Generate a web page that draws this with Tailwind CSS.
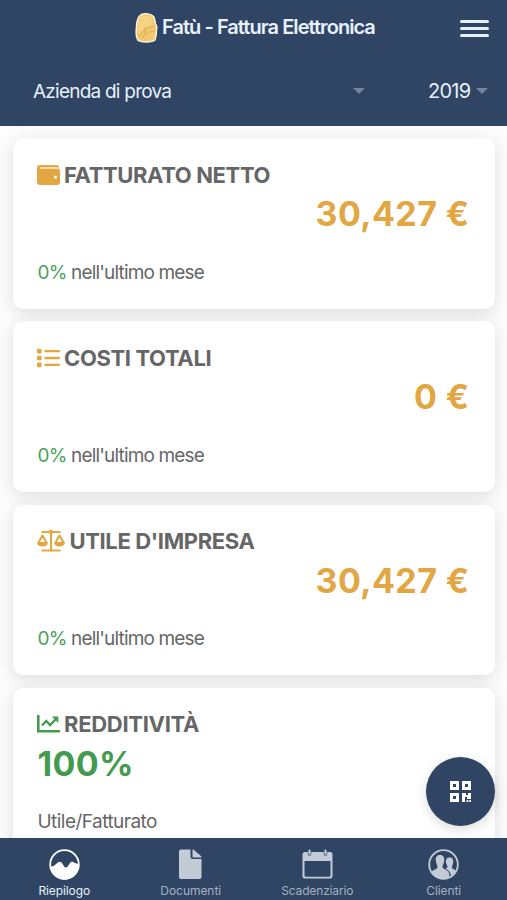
<!DOCTYPE html>
<html lang="it">
<head>
<meta charset="utf-8">
<title>Fatù - Fattura Elettronica</title>
<script src="https://cdn.jsdelivr.net/npm/@tailwindcss/browser@4"></script>
</head>
<body class="bg-white">
<div class="relative flex h-[900px] w-[507px] flex-col overflow-hidden bg-[#fdfdfd] font-['Inter',sans-serif] text-[#666]">
  <header class="z-10 h-[125.500px] shrink-0 bg-[#304463] text-[#e6f1fc]">
    <div class="flex h-[56px] items-center pr-[18px] pl-[135px]">
      <svg class="mt-[-1px] h-[30px] w-[23px] shrink-0" viewBox="0 0 23 30"><path d="M7 1.2C10 .2 16 .5 18.500 3.500C20.500 6 20 9 20.500 11C22.500 13 22 15 21.500 17C21.200 20 21.500 24 20 27C17 29.500 7 29.700 3 27.500C.5 24 .8 19 1.500 14C1.200 9 3 3 7 1.200Z" fill="#f0c970" stroke="#faf3e6" stroke-width="1.400"/><path d="M7 3C10 2 15 2.500 17 5C18.500 9 17 11 15 13C10 14 6 18 3.500 21C2.500 14 3 6 7 3Z" fill="#f4d382"/><path d="M4 24C8 17 14 14 20 13M7 25C11 20 15 18 20 18M10 14C9 18 10 20 9 23" fill="none" stroke="#dfb050" stroke-width="1"/></svg>
      <h1 class="mt-[-3px] ml-[4px] w-[213px] text-[20px] leading-[28px] font-semibold tracking-[-0.95px] whitespace-nowrap">Fatù - Fattura Elettronica</h1>
      <div class="ml-auto flex w-[29px] flex-col gap-[4.500px] pt-px"><i class="h-[2.500px] rounded bg-[#e6f1fc]"></i><i class="h-[2.500px] rounded bg-[#e6f1fc]"></i><i class="h-[2.500px] rounded bg-[#e6f1fc]"></i></div>
    </div>
    <div class="flex h-[69px] items-center pr-[19px] pl-[33px] text-[19px] leading-[28px]">
      <span class="mt-[2px] tracking-[-0.77px]">Azienda di prova</span>
      <svg class="ml-auto h-[6px] w-[12px]" viewBox="0 0 12 6"><path d="M0 0H12L6 6Z" fill="#74849e"/></svg>
      <span class="mt-px ml-[63px] w-[42px] text-[20px] tracking-[-0.75px]">2019</span>
      <svg class="ml-[6px] h-[6px] w-[12px]" viewBox="0 0 12 6"><path d="M0 0H12L6 6Z" fill="#74849e"/></svg>
    </div>
  </header>

  <main class="flex h-[712.500px] shrink-0 flex-col gap-[12.700px] overflow-hidden px-[12.500px] pt-[12.500px]">
    <section class="h-[170.600px] shrink-0 rounded-[10px] bg-white px-[25px] pt-[23px] shadow-[0_4px_18px_rgba(0,0,0,0.13)]">
      <h2 class="flex h-[28px] items-center gap-[4px] text-[22px] font-bold tracking-[-0.37px]">
        <svg class="mt-[-1px] ml-[-0.500px] h-[20px] w-[23px]" viewBox="0 0 23 20"><path d="M3 0H19.500Q22 0 22 2.500V4Q23 4.400 23 6V17Q23 20 20 20H3Q0 20 0 17V3Q0 0 3 0Z" fill="#e2a643"/><path d="M3.500 3H21" stroke="#fbedd2" stroke-width="1.700" stroke-linecap="round"/><circle cx="18.500" cy="12" r="1.600" fill="#fff"/></svg>
        <span>FATTURATO NETTO</span>
      </h2>
      <p class="mt-[5px] h-[40px] text-right text-[34px] leading-[40px] font-bold tracking-[0.4px] text-[#e2a643]">30,427 €</p>
      <p class="mt-[24.500px] text-[19px] leading-[28px] tracking-[-0.83px]"><span class="text-[#4aa35a]">0%</span> nell'ultimo mese</p>
    </section>

    <section class="h-[170.600px] shrink-0 rounded-[10px] bg-white px-[25px] pt-[23px] shadow-[0_4px_18px_rgba(0,0,0,0.13)]">
      <h2 class="flex h-[28px] items-center gap-[4px] text-[22px] font-bold tracking-[-0.37px]">
        <svg class="mt-[-1px] ml-[-0.500px] h-[20px] w-[23px]" viewBox="0 0 23 20" fill="#e2a643"><rect y=".8" width="4.600" height="4.600" rx="1"/><rect y="7.700" width="4.600" height="4.600" rx="1"/><rect y="14.600" width="4.600" height="4.600" rx="1"/><rect x="7.300" y="1.900" width="15.700" height="2.400" rx="1"/><rect x="7.300" y="8.800" width="15.700" height="2.400" rx="1"/><rect x="7.300" y="15.700" width="15.700" height="2.400" rx="1"/></svg>
        <span>COSTI TOTALI</span>
      </h2>
      <p class="mt-[5px] h-[40px] text-right text-[34px] leading-[40px] font-bold tracking-[0.4px] text-[#e2a643]">0 €</p>
      <p class="mt-[24.500px] text-[19px] leading-[28px] tracking-[-0.83px]"><span class="text-[#4aa35a]">0%</span> nell'ultimo mese</p>
    </section>

    <section class="h-[170.600px] shrink-0 rounded-[10px] bg-white px-[25px] pt-[23px] shadow-[0_4px_18px_rgba(0,0,0,0.13)]">
      <h2 class="flex h-[28px] items-center gap-[4.500px] text-[22px] font-bold tracking-[-0.37px]">
        <svg class="mt-[-2px] ml-[-0.500px] h-[23px] w-[28px]" viewBox="0 0 28 23" fill="none" stroke="#e2a643" stroke-width="2"><path d="M4.500 3H23.500M14 1V21M4.500 21.500H23.500"/><circle cx="14" cy="3" r="2.200" fill="#e2a643" stroke="none"/><path d="M1.500 13.500L5.500 6.500L9.500 13.500M18.500 13.500L22.500 6.500L26.500 13.500" stroke-width="2" stroke-linejoin="round"/><path d="M0 13H11Q10.500 17.500 5.500 17.500T0 13ZM17 13H28Q27.500 17.500 22.500 17.500T17 13Z" fill="#e2a643" stroke="none"/></svg>
        <span>UTILE D'IMPRESA</span>
      </h2>
      <p class="mt-[5px] h-[40px] text-right text-[34px] leading-[40px] font-bold tracking-[0.4px] text-[#e2a643]">30,427 €</p>
      <p class="mt-[24.500px] text-[19px] leading-[28px] tracking-[-0.83px]"><span class="text-[#4aa35a]">0%</span> nell'ultimo mese</p>
    </section>

    <section class="h-[170.600px] shrink-0 rounded-[10px] bg-white px-[25px] pt-[23px] shadow-[0_4px_18px_rgba(0,0,0,0.13)]">
      <h2 class="flex h-[28px] items-center gap-[4px] text-[22px] font-bold tracking-[-0.3px]">
        <svg class="mt-[-1px] ml-[-0.500px] h-[18px] w-[23px]" viewBox="0 0 23 18" fill="none" stroke="#449b50"><path d="M1.300 0V16.300H23" stroke-width="2.600"/><path d="M5 10.500L9.300 6L13 10L19 4" stroke-width="2.300"/><path d="M14.800 1.500H21.300V8Z" fill="#449b50" stroke="none"/></svg>
        <span>REDDITIVITÀ</span>
      </h2>
      <p class="mt-[5px] h-[40px] text-[34px] leading-[40px] font-bold tracking-[0.3px] text-[#449b50]">100%</p>
      <p class="mt-[24.500px] text-[19px] leading-[28px] tracking-[-0.53px]">Utile/Fatturato</p>
    </section>
  </main>

  <button aria-label="QR" class="absolute top-[757px] left-[426px] z-10 flex size-[69px] items-center justify-center rounded-full bg-[#304463] shadow-[0_3px_12px_rgba(0,0,0,0.15)]">
    <svg class="size-[21px]" viewBox="0 0 21 21"><path fill="#fff" fill-rule="evenodd" d="M0 0H9V9H0ZM3 3V6H6V3ZM12 0H21V9H12ZM15 3V6H18V3ZM0 12H9V21H0ZM3 15V18H6V15ZM12 12H16V14H18V12H21V18H17V16H15V21H12ZM16.500 19H18.300V21H16.500ZM19.200 19H21V21H19.200Z"/></svg>
  </button>

  <nav class="grid h-[62px] shrink-0 grid-cols-4 bg-[#304463] pt-[11px] pl-px text-[12px] leading-[16px] text-[#a6b1c2]">
    <a class="flex flex-col items-center gap-[3px] text-[#e6f1fc]">
      <svg class="size-[31px]" viewBox="0 0 31 31"><circle cx="15.500" cy="15.500" r="14.300" fill="none" stroke="#fff" stroke-width="1.800"/><path d="M1.200 17.500C4 17.500 5 17 7 15C9 12.800 10.500 11.800 12.500 13.500C14.500 15.500 15 18.500 17 18.500C19 18.500 20 14.500 22 13C24 12 25 14.500 29.800 15A14.300 14.300 0 0 1 1.200 17.500Z" fill="#fff"/></svg>
      <span class="tracking-[-0.1px]">Riepilogo</span>
    </a>
    <a class="flex flex-col items-center gap-[3px]">
      <svg class="size-[31px]" viewBox="0 0 31 31" fill="#c3cbd7"><path d="M6 .5H15.500V7.500Q15.500 10 18 10H26.500V28Q26.500 30 24.500 30H6Q4 30 4 28V2.500Q4 .5 6 .5Z"/><path d="M17.500 .5H18.500L26.500 7.500V8.500H18.500Q17.500 8.500 17.500 7.500Z"/></svg>
      <span class="tracking-[-0.05px]">Documenti</span>
    </a>
    <a class="flex flex-col items-center gap-[3px]">
      <svg class="size-[31px]" viewBox="0 0 31 31"><path fill="#c3cbd7" fill-rule="evenodd" d="M3 3H28Q30.500 3 30.500 5.500V27Q30.500 29.500 28 29.500H3Q.5 29.500 .5 27V5.500Q.5 3 3 3ZM2.500 12V26.500Q2.500 27.700 4 27.700H27Q28.500 27.700 28.500 26.500V12Z"/><path d="M7.500 1V5M23.500 1V5" stroke="#304463" stroke-width="3.400" stroke-linecap="round"/><path d="M7.500 1.500V4.800M23.500 1.500V4.800" stroke="#c3cbd7" stroke-width="2.200" stroke-linecap="round"/></svg>
      <span class="tracking-[-0.15px]">Scadenziario</span>
    </a>
    <a class="flex flex-col items-center gap-[3px]">
      <svg class="size-[31px]" viewBox="0 0 31 31"><circle cx="15.500" cy="15.500" r="14.300" fill="none" stroke="#c3cbd7" stroke-width="1.800"/><path fill="#c3cbd7" d="M12 6C15.500 6 16.500 8.500 16.200 11.500C16 14.500 14.500 16 14.500 18C14.500 20 19 20.500 20.500 23C21.500 25 21.500 27 21.500 28Q18 30 13.500 29.500Q7 28.500 3.500 23C5 20.500 9.500 20.500 9.500 18C9.500 16 8 14.500 7.800 11.500C7.500 8.500 8.500 6 12 6Z"/><path fill="#c3cbd7" d="M21.500 8.500C24.500 8.500 25.500 10.500 25.200 13C25 15.500 24 16.500 24 18.500C24 20 26.500 20.500 28 21.500Q26.500 25 23 27C22.500 23 20 21 17.500 19.500C19 19 19.500 18.500 19.500 17.500C19 16 18 15 17.800 12.500C17.800 10 19 8.500 21.500 8.500Z"/></svg>
      <span class="tracking-[-0.1px]">Clienti</span>
    </a>
  </nav>
</div>
</body>
</html>
